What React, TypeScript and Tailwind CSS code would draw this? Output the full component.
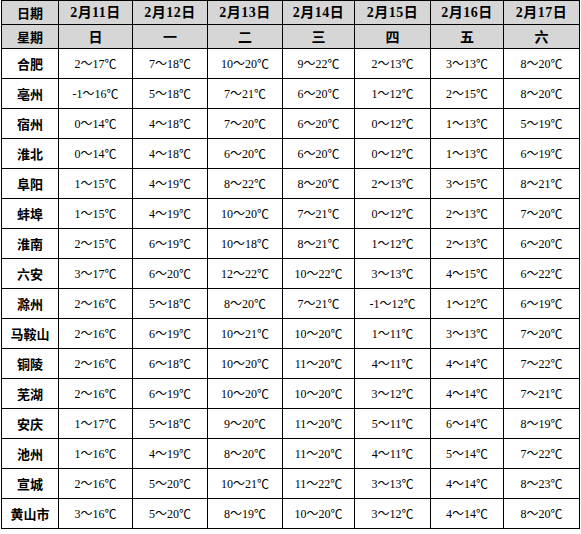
import React from "react";

const dates = ["2月11日", "2月12日", "2月13日", "2月14日", "2月15日", "2月16日", "2月17日"];
const weekdays = ["日", "一", "二", "三", "四", "五", "六"];

const rows: [string, string[]][] = [
  ["合肥", ["2～17", "7～18", "10～20", "9～22", "2～13", "3～13", "8～20"]],
  ["亳州", ["-1～16", "5～18", "7～21", "6～20", "1～12", "2～15", "8～20"]],
  ["宿州", ["0～14", "4～18", "7～20", "6～20", "0～12", "1～13", "5～19"]],
  ["淮北", ["0～14", "4～18", "6～20", "6～20", "0～12", "1～13", "6～19"]],
  ["阜阳", ["1～15", "4～19", "8～22", "8～20", "2～13", "3～15", "8～21"]],
  ["蚌埠", ["1～15", "4～19", "10～20", "7～21", "0～12", "2～13", "7～20"]],
  ["淮南", ["2～15", "6～19", "10～18", "8～21", "1～12", "2～13", "6～20"]],
  ["六安", ["3～17", "6～20", "12～22", "10～22", "3～13", "4～15", "6～22"]],
  ["滁州", ["2～16", "5～18", "8～20", "7～21", "-1～12", "1～12", "6～19"]],
  ["马鞍山", ["2～16", "6～19", "10～21", "10～20", "1～11", "3～13", "7～20"]],
  ["铜陵", ["2～16", "6～18", "10～20", "11～20", "4～11", "4～14", "7～22"]],
  ["芜湖", ["2～16", "6～19", "10～20", "10～20", "3～12", "4～14", "7～21"]],
  ["安庆", ["1～17", "5～18", "9～20", "11～20", "5～11", "6～14", "8～19"]],
  ["池州", ["1～16", "4～19", "8～20", "11～20", "4～11", "5～14", "7～22"]],
  ["宣城", ["2～16", "5～20", "10～21", "11～22", "3～13", "4～14", "8～23"]],
  ["黄山市", ["3～16", "5～20", "8～19", "10～20", "3～12", "4～14", "8～20"]],
];

export default function App() {
  return (
    <div className="w-[581px] h-[534px] bg-white">
      <div className="ml-px inline-grid grid-cols-[56px_73px_74px_74px_71px_75px_72px_75px] grid-rows-[23px_23px] auto-rows-[29px] gap-px bg-black p-px text-black">
        <div className="bg-[#d6d6d6] flex items-center justify-center text-[13px] font-bold font-['Noto_Sans_CJK_SC',sans-serif]">日期</div>
        {dates.map((d) => (
          <div key={d} className="bg-[#d6d6d6] flex items-center justify-center text-[14px] font-bold tracking-[0.5px] font-['Liberation_Serif','Noto_Sans_CJK_SC',serif]">{d}</div>
        ))}
        <div className="bg-[#d6d6d6] flex items-center justify-center text-[13px] font-bold font-['Noto_Sans_CJK_SC',sans-serif]">星期</div>
        {weekdays.map((w) => (
          <div key={w} className="bg-[#d6d6d6] flex items-center justify-center text-[14px] font-bold font-['Noto_Sans_CJK_SC',sans-serif]">{w}</div>
        ))}
        {rows.map(([city, vals]) => (
          <React.Fragment key={city}>
            <div className="bg-white flex items-center justify-center text-[13px] font-bold font-['Noto_Sans_CJK_SC',sans-serif]">{city}</div>
            {vals.map((v, i) => (
              <div key={i} className="bg-white flex items-center justify-center text-[12px] font-['Liberation_Serif','Noto_Sans_CJK_SC',serif]">
                {v}
                <span className="font-['Noto_Sans_CJK_SC',serif]">℃</span>
              </div>
            ))}
          </React.Fragment>
        ))}
      </div>
    </div>
  );
}
